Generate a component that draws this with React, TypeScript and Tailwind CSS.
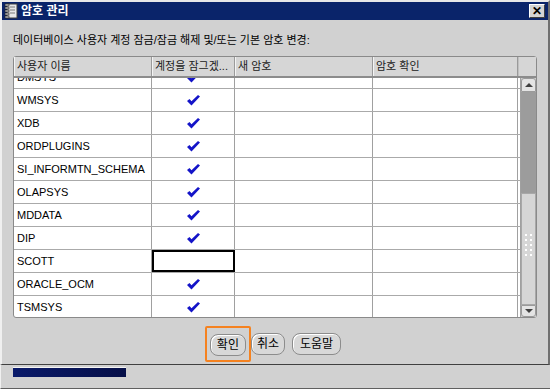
import React from "react";

const users: { name: string; locked: boolean }[] = [
  { name: "DMSYS", locked: true },
  { name: "WMSYS", locked: true },
  { name: "XDB", locked: true },
  { name: "ORDPLUGINS", locked: true },
  { name: "SI_INFORMTN_SCHEMA", locked: true },
  { name: "OLAPSYS", locked: true },
  { name: "MDDATA", locked: true },
  { name: "DIP", locked: true },
  { name: "SCOTT", locked: false },
  { name: "ORACLE_OCM", locked: true },
  { name: "TSMSYS", locked: true },
];

const font = { fontFamily: '"Liberation Sans", "Noto Sans CJK KR", sans-serif' };

function Check() {
  return (
    <svg width="13" height="11" viewBox="0 0 13 11">
      <polygon points="0,6 2.5,4 4.5,6.3 11,0 13,1.5 4.5,10.5" fill="#1414c8" />
    </svg>
  );
}

function NotebookIcon() {
  return (
    <svg width="14" height="16" viewBox="0 0 14 16">
      <rect x="3" y="1" width="10" height="14" fill="#e8e8e8" stroke="#404040" />
      <line x1="6" y1="4" x2="11" y2="4" stroke="#7a7a7a" />
      <line x1="6" y1="7" x2="11" y2="7" stroke="#7a7a7a" />
      <line x1="6" y1="10" x2="11" y2="10" stroke="#7a7a7a" />
      {[2, 5, 8, 11, 14].map((y) => (
        <rect key={y} x="1" y={y - 1} width="4" height="2" fill="#c0c0c0" stroke="#202020" strokeWidth="0.6" />
      ))}
    </svg>
  );
}

function ScrollBar() {
  return (
    <div className="flex w-[16px] flex-col border-l border-[#a0a0a0] bg-[#cfcfcf]">
      <div className="flex h-[14px] items-center justify-center rounded-t-[3px] border border-[#9a9a9a] bg-[#e4e4e4]">
        <div className="h-0 w-0 border-x-[4px] border-b-[4px] border-x-transparent border-b-[#404040]" />
      </div>
      <div className="h-[101px] bg-[#9c9c9c]" />
      <div className="flex h-[112px] flex-col items-center justify-center gap-[3px] border border-[#a8a8a8] bg-[#d6d6d6] pb-[8px]">
        {[0, 1, 2, 3, 4].map((i) => (
          <div key={i} className="flex gap-[3px]">
            <div className="h-[2px] w-[2px] bg-white" />
            <div className="h-[2px] w-[2px] bg-white" />
          </div>
        ))}
      </div>
      <div className="flex h-[12px] items-center justify-center rounded-b-[3px] border border-[#9a9a9a] bg-[#e4e4e4]">
        <div className="h-0 w-0 border-x-[4px] border-t-[4px] border-x-transparent border-t-[#404040]" />
      </div>
    </div>
  );
}

const cols = "grid grid-cols-[138px_83px_138px_145px]";

export default function App() {
  return (
    <div className="flex h-[389px] w-[550px] flex-col overflow-hidden bg-[#d1d1d1]" style={font}>
      {/* 대화상자 */}
      <div className="flex h-[365px] flex-col border-b border-l-2 border-r-2 border-t-2 border-b-[#404040] border-l-[#f0f0f0] border-r-[#707070] border-t-[#e8e8e8] bg-[#d1d1d1]">
        <div className="flex h-[18px] items-center bg-[#0a246a] pl-[2px] pr-[3px]">
          <NotebookIcon />
          <span className="ml-[3px] text-[12px] font-bold text-white">암호 관리</span>
          <div className="ml-auto flex h-[14px] w-[16px] items-center justify-center border border-b-[#404040] border-l-white border-r-[#404040] border-t-white bg-[#d4d4d4] text-[12px] font-bold leading-none text-black">
            ✕
          </div>
        </div>

        <div className="flex flex-1 flex-col px-[11px]">
          <p className="mt-[13px] text-[11px] leading-[14px] text-black">
            데이터베이스 사용자 계정 잠금/잠금 해제 및/또는 기본 암호 변경:
          </p>

          <div className="mt-[9px] flex h-[262px] w-[524px] flex-col rounded-[3px] border border-[#8a8a8a] bg-white">
            {/* 헤더 */}
            <div className="flex h-[21px] border-b-2 border-[#8c8c8c] bg-[#d6d6d6]">
              <div className={cols + " text-[11px] text-[#202020]"}>
                {["사용자 이름", "계정을 잠그겠...", "새 암호", "암호 확인"].map((h) => (
                  <div key={h} className="flex items-center border-r border-r-[#9a9a9a] pl-[3px] shadow-[inset_1px_0_0_#f4f4f4]">
                    {h}
                  </div>
                ))}
              </div>
              <div className="flex-1 border-l border-[#c0c0c0] bg-[#d6d6d6]" />
            </div>

            <div className="flex min-h-0 flex-1">
              <div className="min-h-0 flex-1 overflow-hidden">
                <div className="-mt-[12px]">
                  {users.map((u) => (
                    <div key={u.name} className={cols + " h-[23px] border-b border-[#aaaaaa] text-[11px] text-black"}>
                      <div className="flex items-center border-r border-[#a0a0a0] pl-[3px]">{u.name}</div>
                      <div
                        className={
                          u.locked
                            ? "flex items-center justify-center border-r border-[#a0a0a0]"
                            : "border-2 border-black"
                        }
                      >
                        {u.locked && <Check />}
                      </div>
                      <div className="border-r border-[#a0a0a0]" />
                      <div className="border-r border-[#a0a0a0]" />
                    </div>
                  ))}
                </div>
              </div>
              <ScrollBar />
            </div>
          </div>

          <div className="mt-[8px] flex items-center justify-center pr-[4px]">
            <div className="rounded-[2px] border-2 border-[#f58220] px-[3px] py-[4px]">
              <button className="h-[22px] rounded-[8px] border border-[#8c8c8c] bg-[#d8d8d8] px-[6px] text-[12px] text-black shadow-[inset_1px_1px_0_#ffffff]">
                확인
              </button>
            </div>
            <button className="h-[22px] rounded-[8px] border border-[#8c8c8c] bg-[#d8d8d8] px-[5px] text-[12px] text-black shadow-[inset_1px_1px_0_#ffffff]">
              취소
            </button>
            <button className="ml-[7px] h-[22px] rounded-[8px] border border-[#8c8c8c] bg-[#d8d8d8] px-[7px] text-[12px] text-black shadow-[inset_1px_1px_0_#ffffff]">
              도움말
            </button>
          </div>
        </div>
      </div>

      {/* 뒤 창 */}
      <div className="flex flex-1 flex-col border-b border-[#606060] border-l border-l-[#f0f0f0]">
        <div className="ml-[12px] mt-[2px] h-[10px] w-[113px] border-t border-[#f4f4f4] bg-gradient-to-r from-[#0a1a6a] to-[#060f48]" />
      </div>
    </div>
  );
}
